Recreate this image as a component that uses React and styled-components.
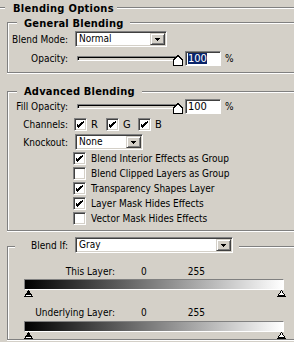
import React from "react";
import styled, { createGlobalStyle } from "styled-components";

const GlobalStyle = createGlobalStyle`
  html, body {
    margin: 0;
    padding: 0;
    background: #d4d0c8;
  }
  body {
    font-family: Tahoma, "DejaVu Sans Condensed", "Liberation Sans", sans-serif;
    font-size: 10px;
    color: #000;
  }
`;

// 체크 표시
const CheckMark = () => (
    <svg width="7" height="7" viewBox="0 0 7 7" shapeRendering="crispEdges">
        <path d="M6 0h1v2h-1v1h-1v1h-1v1h-1v1h-1v1h-1v-1h-1v-1h-1v-3h1v1h1v1h1v-1h1v-1h1v-1h1z" fill="#000" />
    </svg>
);

const DownArrow = () => (
    <svg width="5" height="3" viewBox="0 0 5 3" shapeRendering="crispEdges">
        <path d="M0 0h5v1h-1v1h-1v1h-1v-1h-1v-1h-1z" fill="#000" />
    </svg>
);

const ThumbIcon = () => (
    <svg width="10" height="11" viewBox="0 0 10 11" shapeRendering="crispEdges">
        <polygon points="0.5,10.5 0.5,5 5,0.5 9.5,5 9.5,10.5" fill="#fff" stroke="#000" />
    </svg>
);

const Marker = ({ dark }) => (
    <svg width="9" height="7" viewBox="0 0 9 7" shapeRendering="crispEdges">
        <polygon points="4.5,0.5 8.5,6.5 0.5,6.5" fill={dark ? "#000" : "#fff"} stroke="#000" />
        <line x1="2" y1="5" x2="7" y2="5" stroke={dark ? "#fff" : "#000"} />
    </svg>
);

function Select({ width, value }) {
    return (
        <SelectBox $w={width}>
            <SelectText>{value}</SelectText>
            <ArrowButton>
                <DownArrow />
            </ArrowButton>
        </SelectBox>
    );
}

function Checkbox({ checked }) {
    return <Box>{checked && <CheckMark />}</Box>;
}

function OpacityControl({ selected }) {
    return (
        <ControlLine>
            <Slider>
                <Track />
                <Thumb>
                    <ThumbIcon />
                </Thumb>
            </Slider>
            <NumberBox>
                {selected ? <Selected>100</Selected> : <span>100</span>}
            </NumberBox>
            <Unit>%</Unit>
        </ControlLine>
    );
}

const options = [
    { text: "Blend Interior Effects as Group", checked: true },
    { text: "Blend Clipped Layers as Group", checked: false },
    { text: "Transparency Shapes Layer", checked: true },
    { text: "Layer Mask Hides Effects", checked: true },
    { text: "Vector Mask Hides Effects", checked: false },
];

function App() {
    return (
        <Dialog>
            <GlobalStyle />
            {/* 상단 제목 */}
            <Heading>
                <Rule $w={5} />
                <Title>Blending Options</Title>
                <Rule />
            </Heading>

            {/* General Blending */}
            <Frame $mt={6} $pb={6}>
                <Legend $mt={-6}>General Blending</Legend>
                <FieldRow $mt={1} $h={16}>
                    <Label>Blend Mode:</Label>
                    <Select width={92} value="Normal" />
                </FieldRow>
                <FieldRow $mt={4} $h={15}>
                    <Label>Opacity:</Label>
                    <OpacityControl selected />
                </FieldRow>
            </Frame>

            {/* Advanced Blending */}
            <Frame $mt={18} $pb={5}>
                <Legend $mt={-7}>Advanced Blending</Legend>
                <FieldRow $mt={1} $h={15}>
                    <Label>Fill Opacity:</Label>
                    <OpacityControl />
                </FieldRow>
                <FieldRow $mt={4} $h={13}>
                    <Label>Channels:</Label>
                    <Channels>
                        {["R", "G", "B"].map((c) => (
                            <Channel key={c}>
                                <Checkbox checked />
                                <span>{c}</span>
                            </Channel>
                        ))}
                    </Channels>
                </FieldRow>
                <FieldRow $mt={3} $h={16}>
                    <Label>Knockout:</Label>
                    <Select width={68} value="None" />
                </FieldRow>
                <OptionList>
                    {options.map((o) => (
                        <OptionRow key={o.text}>
                            <Checkbox checked={o.checked} />
                            <span>{o.text}</span>
                        </OptionRow>
                    ))}
                </OptionList>
            </Frame>

            {/* Blend If */}
            <Frame $mt={15}>
                <BlendIfLegend>
                    <Label>Blend If:</Label>
                    <Select width={158} value="Gray" />
                </BlendIfLegend>

                <LayerHeader $mt={12}>
                    <LayerLabel>This Layer:</LayerLabel>
                    <Value $ml={26}>0</Value>
                    <Value $ml={41}>255</Value>
                </LayerHeader>
                <Ramp $mt={1} />
                <Markers>
                    <Marker dark />
                    <Marker />
                </Markers>

                <LayerHeader $mt={9}>
                    <LayerLabel>Underlying Layer:</LayerLabel>
                    <Value $ml={26}>0</Value>
                    <Value $ml={41}>255</Value>
                </LayerHeader>
                <Ramp $mt={2} />
                <Markers>
                    <Marker dark />
                    <Marker />
                </Markers>
            </Frame>
        </Dialog>
    );
}

export default App;

const Dialog = styled.div`
    width: 294px;
    height: 342px;
    overflow: hidden;
    background: #d4d0c8;
    display: flex;
    flex-direction: column;
`;

const Heading = styled.div`
    display: flex;
    align-items: center;
    height: 16px;
`;

// 음각 선
const Rule = styled.div`
    flex: ${(p) => (p.$w ? `0 0 ${p.$w}px` : "1")};
    border-top: 1px solid #808080;
    border-bottom: 1px solid #fff;
`;

const Title = styled.span`
    font-size: 11px;
    font-weight: bold;
    letter-spacing: 0.3px;
    line-height: 13px;
    padding: 0 3px 0 8px;
    white-space: nowrap;
`;

const Frame = styled.section`
    margin: ${(p) => p.$mt}px -20px 0 7px;
    padding-bottom: ${(p) => p.$pb || 0}px;
    border: 1px solid #808080;
    border-right: 0;
    box-shadow: inset 1px 1px 0 #fff, 0 1px 0 #fff;
    display: flex;
    flex-direction: column;
`;

const Legend = styled.h2`
    align-self: flex-start;
    margin: ${(p) => p.$mt}px 0 0 9px;
    padding: 0 7px;
    background: #d4d0c8;
    font-size: 11px;
    font-weight: bold;
    letter-spacing: 0.2px;
    line-height: 13px;
    white-space: nowrap;
`;

const FieldRow = styled.div`
    display: grid;
    grid-template-columns: 60px auto;
    column-gap: 7px;
    align-items: center;
    justify-content: start;
    height: ${(p) => p.$h}px;
    margin-top: ${(p) => p.$mt}px;
`;

const Label = styled.span`
    text-align: right;
    white-space: nowrap;
    line-height: 13px;
`;

const SelectBox = styled.div`
    width: ${(p) => p.$w}px;
    height: 16px;
    box-sizing: border-box;
    padding: 1px;
    background: #fff;
    border: 1px solid;
    border-color: #808080 #fff #fff #808080;
    box-shadow: inset 1px 1px 0 #404040, inset -1px -1px 0 #d4d0c8;
    display: flex;
    align-items: center;
`;

const SelectText = styled.span`
    flex: 1;
    padding-left: 2px;
    line-height: 12px;
    white-space: nowrap;
`;

const ArrowButton = styled.div`
    width: 15px;
    height: 12px;
    box-sizing: border-box;
    background: #d4d0c8;
    border: 1px solid;
    border-color: #d4d0c8 #404040 #404040 #d4d0c8;
    box-shadow: inset 1px 1px 0 #fff, inset -1px -1px 0 #808080;
    display: flex;
    align-items: center;
    justify-content: center;
`;

const ControlLine = styled.div`
    display: flex;
    align-items: center;
    height: 15px;
`;

const Slider = styled.div`
    position: relative;
    width: 105px;
    height: 15px;
    margin: 0 3px 0 2px;
`;

const Track = styled.div`
    margin-top: 5px;
    width: 100px;
    height: 5px;
    box-sizing: border-box;
    border: 1px solid;
    border-color: #808080 #fff #fff #808080;
    box-shadow: inset 1px 1px 0 #000;
    background: #d4d0c8;
`;

// 슬라이더 손잡이 (트랙 위에 겹침)
const Thumb = styled.div`
    position: absolute;
    left: 96px;
    top: 4px;
    line-height: 0;
`;

const NumberBox = styled.div`
    width: 36px;
    height: 15px;
    box-sizing: border-box;
    padding: 1px 0 0 2px;
    background: #fff;
    border: 1px solid;
    border-color: #808080 #fff #fff #808080;
    box-shadow: inset 1px 1px 0 #404040;
    line-height: 11px;
    font-size: 11px;
`;

const Selected = styled.span`
    display: inline-block;
    background: #0a246a;
    color: #fff;
    line-height: 11px;
`;

const Unit = styled.span`
    margin-left: 4px;
    line-height: 13px;
`;

const Box = styled.span`
    flex: none;
    width: 13px;
    height: 13px;
    box-sizing: border-box;
    background: #fff;
    border: 1px solid;
    border-color: #808080 #fff #fff #808080;
    box-shadow: inset 1px 1px 0 #404040, inset -1px -1px 0 #d4d0c8;
    display: flex;
    align-items: center;
    justify-content: center;
`;

const Channels = styled.div`
    display: grid;
    grid-template-columns: repeat(3, 32px);
    margin-left: -1px;
`;

const Channel = styled.label`
    display: flex;
    align-items: center;
    gap: 4px;
    line-height: 13px;
    font-size: 11px;
`;

const OptionList = styled.div`
    display: flex;
    flex-direction: column;
    gap: 2px;
    margin: 2px 0 0 65px;
`;

const OptionRow = styled.label`
    display: flex;
    align-items: center;
    gap: 5px;
    height: 13px;
    white-space: nowrap;
`;

const BlendIfLegend = styled.div`
    align-self: flex-start;
    display: grid;
    grid-template-columns: 53px auto;
    column-gap: 7px;
    align-items: center;
    margin: -10px 0 0 7px;
    padding-right: 6px;
    background: #d4d0c8;
`;

const LayerHeader = styled.div`
    display: flex;
    line-height: 13px;
    margin-top: ${(p) => p.$mt}px;
    white-space: nowrap;
`;

const LayerLabel = styled.span`
    width: 107px;
    text-align: right;
`;

const Value = styled.span`
    margin-left: ${(p) => p.$ml}px;
`;

const Ramp = styled.div`
    margin: ${(p) => p.$mt}px 0 0 16px;
    width: 260px;
    height: 11px;
    box-sizing: border-box;
    border: 1px solid;
    border-color: #808080 #fff #fff #808080;
    background: linear-gradient(to right, #000, #fff);
`;

const Markers = styled.div`
    display: flex;
    justify-content: space-between;
    width: 262px;
    height: 7px;
    margin-left: 16px;
    line-height: 0;
`;
